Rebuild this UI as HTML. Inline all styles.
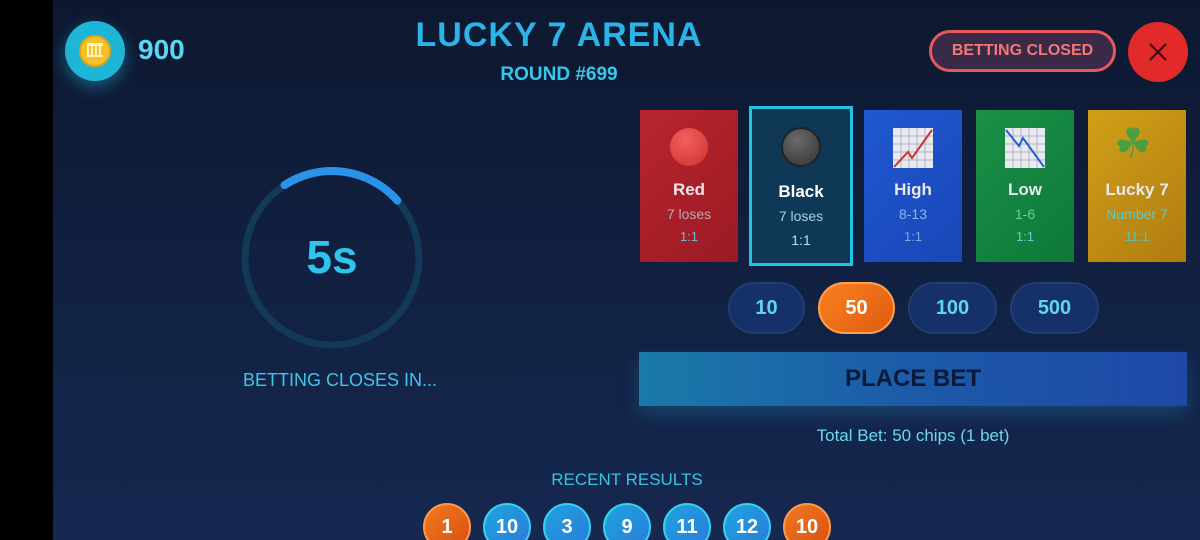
<!DOCTYPE html>
<html style="overflow:hidden;width:1200px;height:540px"><head><meta charset="utf-8"><style>
*{margin:0;padding:0;box-sizing:border-box}
body{width:1200px;height:540px;overflow:hidden;font-family:"Liberation Sans",sans-serif;background:#000;position:relative}
.main{position:absolute;left:53px;top:0;width:1147px;height:540px;background:linear-gradient(180deg,#0d1830 0%,#122244 60%,#162850 100%)}
.a{position:absolute}
.c{text-align:center}
.card{position:absolute;top:110px;width:98px;height:152px;text-align:center;color:#e8e8ee}
.card .t{position:absolute;top:70px;width:100%;font-weight:bold;font-size:17px}
.card .s{position:absolute;top:96px;width:100%;font-size:14px}
.card .r{position:absolute;top:119px;width:100%;font-size:13px}
.chip{position:absolute;top:282px;height:52px;border-radius:26px;background:#16306a;border:2px solid #1f3f6e;color:#5fd6ef;font-weight:bold;font-size:20px;text-align:center;line-height:48px}
.res{position:absolute;top:503px;width:48px;height:48px;border-radius:50%;border:2px solid #3ad0f0;background:linear-gradient(135deg,#1fa3e0,#2a7bd8);color:#fff;font-weight:bold;font-size:20px;text-align:center;line-height:44px}
.res.o{border-color:#ff9a50;background:linear-gradient(135deg,#f07a20,#d85010)}
</style></head><body>
<div class="main"></div>
<div class="a" style="left:65px;top:21px;width:60px;height:60px;border-radius:50%;background:#1fb5d6;box-shadow:0 6px 16px rgba(30,180,220,.45)"></div>
<div class="a" style="left:79px;top:35px;width:32px;height:32px;border-radius:50%;background:#f5c02a;border:2px solid #e6a510"></div>
<div class="a" style="left:87px;top:43px;width:16px;height:14px;border-top:3px solid #fff3b0;border-bottom:2px solid #fff3b0;background:repeating-linear-gradient(90deg,#fff3b0 0 2px,transparent 2px 4px)"></div>
<div class="a" style="left:138px;top:34px;font-size:28px;font-weight:bold;color:#5ad6f0">900</div>
<div class="a c" style="left:380px;top:16px;width:358px;font-size:34px;font-weight:bold;color:#2ab4e8;letter-spacing:1px">LUCKY 7 ARENA</div>
<div class="a c" style="left:440px;top:64px;width:238px;font-size:19px;font-weight:bold;color:#36c8ec">ROUND #699</div>
<div class="a c" style="left:929px;top:30px;width:187px;height:42px;border-radius:21px;border:3px solid #e25a5a;background:#3a2a48;color:#f27878;font-size:16px;font-weight:bold;line-height:36px">BETTING CLOSED</div>
<div class="a" style="left:1128px;top:22px;width:60px;height:60px;border-radius:50%;background:#e22a2a"><svg width="60" height="60"><path d="M22 22L38 38M38 22L22 38" stroke="#3a0a10" stroke-width="2"/></svg></div>
<svg class="a" style="left:232px;top:158px" width="200" height="200"><circle cx="100" cy="100" r="87" fill="none" stroke="#123a58" stroke-width="7"/><path d="M52.5 27.1A87 87 0 0 1 165.4 42.6" fill="none" stroke="#2a92e8" stroke-width="8" stroke-linecap="round"/></svg>
<div class="a c" style="left:232px;top:230px;width:200px;font-size:46px;font-weight:bold;color:#2ec4ec">5s</div>
<div class="a c" style="left:200px;top:370px;width:280px;font-size:18px;color:#3ec6ec">BETTING CLOSES IN...</div>

<div class="card" style="left:640px;background:linear-gradient(135deg,#b8252e,#9a1a24)"><div class="a" style="left:30px;top:18px;width:38px;height:38px;border-radius:50%;background:radial-gradient(circle at 40% 30%,#f06060,#d0302a)"></div><div class="t">Red</div><div class="s" style="color:#b8aab8">7 loses</div><div class="r" style="color:#70b8c8">1:1</div></div>
<div class="card" style="left:749px;top:106px;width:104px;height:160px;background:#0e3856;border:3px solid #22c4e4"><div class="a" style="left:29px;top:18px;width:40px;height:40px;border-radius:50%;background:radial-gradient(circle at 40% 30%,#6a6a6a,#333);border:2px solid #222"></div><div class="t" style="top:73px;color:#fff">Black</div><div class="s" style="top:99px;color:#9ad6e6">7 loses</div><div class="r" style="top:123px;color:#a8e6f2;font-size:14px">1:1</div></div>
<div class="card" style="left:864px;background:linear-gradient(135deg,#2058d0,#1a46b8)"><svg class="a" style="left:29px;top:18px" width="40" height="40"><rect width="40" height="40" fill="#e8eaf0"/><path d="M0 8H40M0 16H40M0 24H40M0 32H40M8 0V40M16 0V40M24 0V40M32 0V40" stroke="#b0b4c0" stroke-width="1"/><path d="M1 39L15 24L19 30L39 2" stroke="#d03030" stroke-width="2" fill="none"/></svg><div class="t">High</div><div class="s" style="color:#80bce8">8-13</div><div class="r" style="color:#60b8e0">1:1</div></div>
<div class="card" style="left:976px;background:linear-gradient(135deg,#1a9048,#0e7838)"><svg class="a" style="left:29px;top:18px" width="40" height="40"><rect width="40" height="40" fill="#e8eaf0"/><path d="M0 8H40M0 16H40M0 24H40M0 32H40M8 0V40M16 0V40M24 0V40M32 0V40" stroke="#b0b4c0" stroke-width="1"/><path d="M1 2L14 18L18 10L39 39" stroke="#2060d0" stroke-width="2" fill="none"/></svg><div class="t">Low</div><div class="s" style="color:#70c8a8">1-6</div><div class="r" style="color:#70c8c8">1:1</div></div>
<div class="card" style="left:1088px;background:linear-gradient(135deg,#d0a018,#b07c10)"><div class="a" style="left:26px;top:10px;font-size:42px;line-height:48px;color:#4aa040">☘</div><div class="t">Lucky 7</div><div class="s" style="color:#60c8c0">Number 7</div><div class="r" style="color:#60c0b0">11:1</div></div>

<div class="chip" style="left:728px;width:77px">10</div>
<div class="chip" style="left:818px;width:77px;background:linear-gradient(135deg,#f88020,#e05c10);border-color:#ffa050;color:#fff">50</div>
<div class="chip" style="left:908px;width:89px">100</div>
<div class="chip" style="left:1010px;width:89px">500</div>
<div class="a c" style="left:639px;top:352px;width:548px;height:54px;background:linear-gradient(90deg,#1a7aa8,#1c5aa8,#1e48a8);color:#0a1a38;font-weight:bold;font-size:24px;line-height:54px;box-shadow:0 8px 16px rgba(30,160,220,.25)">PLACE BET</div>
<div class="a c" style="left:639px;top:426px;width:548px;font-size:17px;color:#6ad8f0">Total Bet: 50 chips (1 bet)</div>
<div class="a c" style="left:500px;top:470px;width:254px;font-size:17px;color:#38c4e4">RECENT RESULTS</div>
<div style="position:absolute;left:0;top:0;width:1200px;height:540px;overflow:hidden">
<div class="res o" style="left:423px">1</div>
<div class="res" style="left:483px">10</div>
<div class="res" style="left:543px">3</div>
<div class="res" style="left:603px">9</div>
<div class="res" style="left:663px">11</div>
<div class="res" style="left:723px">12</div>
<div class="res o" style="left:783px">10</div>
</div>
</body></html>
